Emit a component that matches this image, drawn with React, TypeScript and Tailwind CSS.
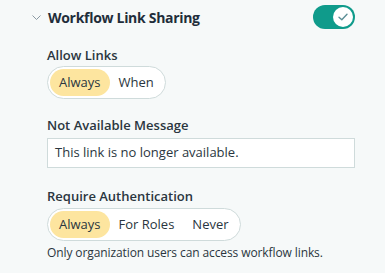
import React from "react";

function Segmented({ options }: { options: string[] }) {
  return (
    <div className="inline-flex items-center rounded-full border border-[#cfdbdb] bg-white p-[2px] h-[33px]">
      {options.map((o, i) => (
        <div
          key={o}
          className={
            i === 0
              ? "h-[27px] flex items-center rounded-full bg-[#fde59f] px-[9px] text-[13px] text-[#2a3640]"
              : "h-[27px] flex items-center rounded-full px-[9px] text-[13px] text-[#2a3640]"
          }
        >
          {o}
        </div>
      ))}
    </div>
  );
}

export default function App() {
  return (
    <div
      className="w-[385px] h-[273px] bg-[#f6f9f9] text-[#2a3640]"
      style={{ fontFamily: '"Open Sans", "Noto Sans", sans-serif' }}
    >
      <div className="flex items-center pl-[32px] pr-[30px] pt-[5px] h-[24px] box-content">
        <svg width="9" height="5" viewBox="0 0 9 5" className="mr-[7px] mt-[1px]">
          <path d="M0.5 0.5 L4.5 4.5 L8.5 0.5" fill="none" stroke="#8a99a3" strokeWidth="1" />
        </svg>
        <div className="flex-1 mt-[2px] text-[14px] font-bold tracking-[-0.3px] text-[#1f2e3b] leading-none">Workflow Link Sharing</div>
        <div className="w-[42px] h-[24px] rounded-full bg-[#0f9b8b] flex items-center justify-end pr-[2px]">
          <div className="w-[20px] h-[20px] rounded-full bg-white flex items-center justify-center">
            <svg width="10" height="8" viewBox="0 0 10 8">
              <path d="M1 4.2 L3.8 6.8 L9 1.2" fill="none" stroke="#5d8f97" strokeWidth="1.4" strokeLinecap="round" strokeLinejoin="round" />
            </svg>
          </div>
        </div>
      </div>
      <div className="pl-[47px] pr-[30px]">
        <div className="mt-[17px] text-[13px] font-semibold leading-[18px]">Allow Links</div>
        <div className="mt-[2px] flex">
          <Segmented options={["Always", "When"]} />
        </div>
        <div className="mt-[17px] text-[13px] font-semibold leading-[18px]">Not Available Message</div>
        <div className="mt-[4px] h-[30px] border border-[#cfdbdb] bg-white flex items-center px-[7px] text-[13px]">
          This link is no longer available.
        </div>
        <div className="mt-[19px] text-[13px] font-semibold leading-[18px]">Require Authentication</div>
        <div className="mt-[3px] flex">
          <Segmented options={["Always", "For Roles", "Never"]} />
        </div>
        <div className="mt-[4px] text-[12px] tracking-[-0.1px] leading-[16px]">Only organization users can access workflow links.</div>
      </div>
    </div>
  );
}
